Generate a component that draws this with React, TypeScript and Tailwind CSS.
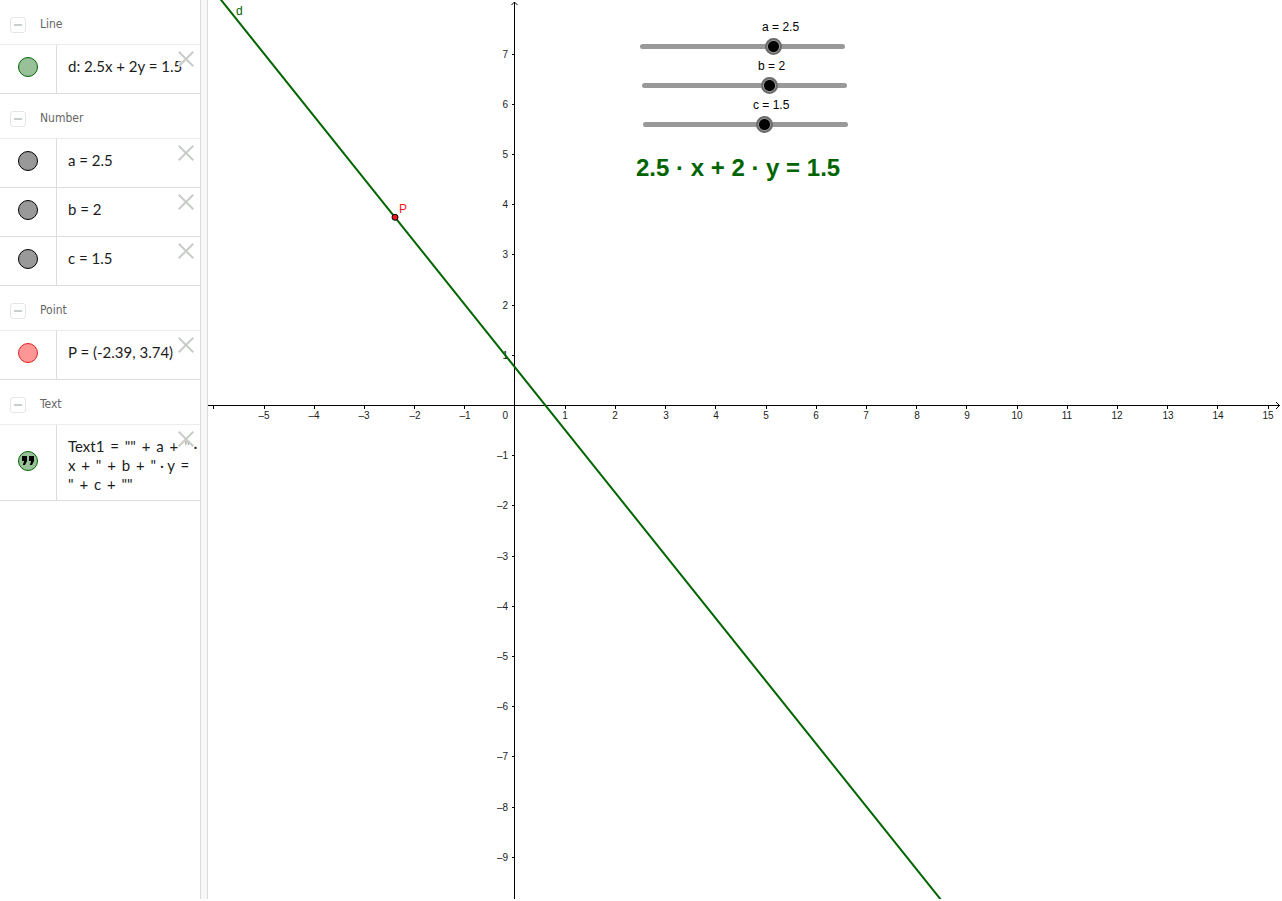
import React, { useState } from 'react';

type Name = 'a' | 'b' | 'c';
type Values = Record<Name, number>;

const MIN = -8;
const MAX = 8;
const UNIT = 50.2;
const ORIGIN = { x: 307, y: 405 };

const toX = (x: number) => ORIGIN.x + x * UNIT;
const toY = (y: number) => ORIGIN.y - y * UNIT;

const range = (from: number, to: number) =>
  Array.from({ length: to - from + 1 }, (_, i) => from + i).filter((n) => n !== 0);

const label = (n: number) => (n < 0 ? `–${-n}` : `${n}`);

interface GroupProps {
  title: string;
  children: React.ReactNode;
}

function Group({ title, children }: GroupProps) {
  const [open, setOpen] = useState(true);
  return (
    <section>
      <div className="flex h-[45px] items-center border-b border-[#ececec] pt-1 pl-2.5">
        <button
          type="button"
          aria-label={`Toggle ${title}`}
          aria-expanded={open}
          onClick={() => setOpen(!open)}
          className="mt-0.5 flex size-4 shrink-0 items-center justify-center rounded-[3px] border border-[#e6e6e6]"
        >
          <span className="h-0.5 w-2 bg-[#c8cfc8]" />
        </button>
        <h2 className="ml-3.5 font-['DejaVu_Sans_Condensed','Noto_Sans',sans-serif] text-[12px] leading-4 text-[#666]">
          {title}
        </h2>
      </div>
      {open && children}
    </section>
  );
}

interface RowProps {
  name: string;
  marble: string;
  quote?: boolean;
  children: React.ReactNode;
}

function Row({ name, marble, quote, children }: RowProps) {
  return (
    <div className="relative flex min-h-[49px] border-b border-[#dcdcdc]">
      <div className="flex w-[57px] shrink-0 items-center justify-center border-r border-[#dcdcdc] pb-1">
        <button
          type="button"
          aria-label={`Show or hide ${name}`}
          className={`flex size-5 items-center justify-center rounded-full border ${marble}`}
        >
          {quote && (
            <svg width="12" height="10" viewBox="0 0 12 10" aria-hidden="true">
              <path d="M0 0H5V5L3 9H0.8L2.2 5H0ZM7 0H12V5L10 9H7.8L9.2 5H7Z" fill="#000" />
            </svg>
          )}
        </button>
      </div>
      <div className="flex flex-1 items-center pb-1.5 pl-[11px] font-['Lato',sans-serif] text-[15px] leading-[19px] whitespace-nowrap text-[#1c1c1c]">
        {children}
      </div>
      <button
        type="button"
        aria-label={`Delete ${name}`}
        className="absolute top-1.5 right-1.5 bg-white/50"
      >
        <svg width="16" height="16" viewBox="0 0 16 16" aria-hidden="true">
          <path d="M0.7 0.7L15.3 15.3M15.3 0.7L0.7 15.3" stroke="#c8cdc8" strokeWidth="2" />
        </svg>
      </button>
    </div>
  );
}

function Op({ children }: { children: React.ReactNode }) {
  return <span className="mx-0.5">{children}</span>;
}

interface SliderProps {
  name: Name;
  value: number;
  place: string;
  onChange: (value: number) => void;
}

function Slider({ name, value, place, onChange }: SliderProps) {
  const offset = ((value - MIN) / (MAX - MIN)) * 200;
  return (
    <div className={`absolute h-[17px] w-[217px] ${place}`}>
      <label
        htmlFor={`slider-${name}`}
        className="absolute -top-[19px] text-[12px] leading-4 whitespace-nowrap text-black"
        style={{ left: `${Math.round(offset) - 3}px` }}
      >
        {name} = {value}
      </label>
      <span className="absolute inset-x-1.5 top-1.5 h-[5px] rounded-full bg-[#999]" />
      <input
        id={`slider-${name}`}
        type="range"
        min={MIN}
        max={MAX}
        step={0.1}
        value={value}
        onChange={(e) => onChange(Number(e.target.value))}
        className="relative block h-[17px] w-full cursor-pointer appearance-none bg-transparent [&::-webkit-slider-thumb]:size-[17px] [&::-webkit-slider-thumb]:appearance-none [&::-webkit-slider-thumb]:rounded-full [&::-webkit-slider-thumb]:border-2 [&::-webkit-slider-thumb]:border-[#6b6b6b] [&::-webkit-slider-thumb]:bg-[radial-gradient(circle,#000_5px,#999_6px)]"
      />
    </div>
  );
}

function Graph({ a, b, c }: Values) {
  const lineY = (x: number) => (c - a * x) / b;
  return (
    <svg className="absolute inset-0 size-full" role="img" aria-label="Line d through point P">
      {/* axes */}
      <g stroke="#000" strokeWidth="1" shapeRendering="crispEdges">
        <line x1="0" y1={ORIGIN.y + 0.5} x2="100%" y2={ORIGIN.y + 0.5} />
        <line x1={ORIGIN.x - 0.5} y1="2" x2={ORIGIN.x - 0.5} y2="100%" />
        {range(-6, 15).map((n) => (
          <line key={n} x1={Math.floor(toX(n)) + 0.5} y1="405" x2={Math.floor(toX(n)) + 0.5} y2="409" />
        ))}
        {range(-9, 7).map((n) => (
          <line key={n} x1="304" y1={Math.round(toY(n)) + 0.5} x2="307" y2={Math.round(toY(n)) + 0.5} />
        ))}
      </g>
      <path d="M303.5 5L306.5 2L309.5 5" fill="none" stroke="#000" />
      <svg x="100%" y="405.5" overflow="visible">
        <path d="M-4 -3.5L-0.5 0L-4 3.5" fill="none" stroke="#000" />
      </svg>

      <g fontSize="10" fill="#1c1c1c">
        {range(-5, 15).map((n) => (
          <text key={n} x={Math.round(toX(n))} y="419" textAnchor="middle">
            {label(n)}
          </text>
        ))}
        {range(-9, 7).map((n) => (
          <text key={n} x="300" y={Math.round(toY(n)) + 4} textAnchor="end">
            {label(n)}
          </text>
        ))}
        <text x="300" y="419" textAnchor="end">
          0
        </text>
      </g>

      <line
        x1={toX(-8)}
        y1={toY(lineY(-8))}
        x2={toX(16)}
        y2={toY(lineY(16))}
        stroke="#006400"
        strokeWidth="2"
      />
      <text x="28" y="15" fontSize="12" fill="#006400">
        d
      </text>
      <circle cx={toX(-2.39)} cy={toY(3.74)} r="3" fill="#f01818" stroke="#000" />
      <text x="191" y="213" fontSize="12" fill="#f01818">
        P
      </text>
    </svg>
  );
}

const green = 'border-[#006400] bg-[#99c199]';
const grey = 'border-black bg-[#999]';
const red = 'border-[#e02020] bg-[#ff9696]';

export default function App() {
  const [values, setValues] = useState<Values>({ a: 2.5, b: 2, c: 1.5 });
  const { a, b, c } = values;
  const update = (name: Name) => (value: number) => setValues({ ...values, [name]: value });

  return (
    <div className="flex h-screen overflow-hidden bg-white pr-0.5 pb-0.5 font-['Liberation_Sans',Arial,sans-serif]">
      <aside className="w-[200px] shrink-0">
        <Group title="Line">
          <Row name="d" marble={green}>
            d: {a}x + {b}y = {c}
          </Row>
        </Group>
        <Group title="Number">
          {(['a', 'b', 'c'] as Name[]).map((name) => (
            <Row key={name} name={name} marble={grey}>
              {name} = {values[name]}
            </Row>
          ))}
        </Group>
        <Group title="Point">
          <Row name="P" marble={red}>
            P = (-2.39, 3.74)
          </Row>
        </Group>
        <Group title="Text">
          <Row name="Text1" marble={green} quote>
            <p className="pt-3">
              Text1 <Op>=</Op> "" <Op>+</Op> a <Op>+</Op> " ·<br />x <Op>+</Op> " <Op>+</Op> b <Op>+</Op> " · y <Op>=</Op>
              <br />" <Op>+</Op> c <Op>+</Op> ""
            </p>
          </Row>
        </Group>
      </aside>
      <div className="w-2 shrink-0 border-x border-[#dcdcdc] bg-[#f8f8f8]" />
      <main className="relative min-w-0 flex-1 overflow-hidden">
        <Graph a={a} b={b} c={c} />
        <Slider name="a" value={a} place="top-[38px] left-[426px]" onChange={update('a')} />
        <Slider name="b" value={b} place="top-[77px] left-[428px]" onChange={update('b')} />
        <Slider name="c" value={c} place="top-[116px] left-[429px]" onChange={update('c')} />
        <p className="absolute top-[154px] left-[428px] text-[24px] leading-7 font-bold whitespace-nowrap text-[#006400]">
          {a} · x + {b} · y = {c}
        </p>
      </main>
    </div>
  );
}
